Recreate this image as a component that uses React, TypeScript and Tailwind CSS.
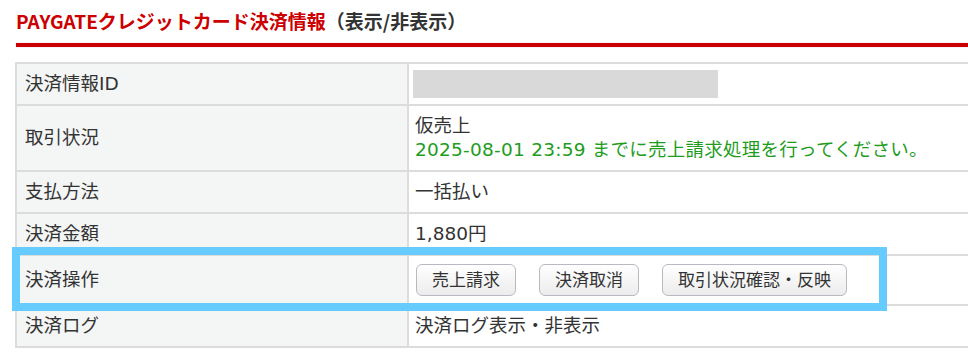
import React from 'react';

const rows = [
  { label: '決済情報ID', kind: 'masked' },
  { label: '取引状況', kind: 'status' },
  { label: '支払方法', kind: 'text', value: '一括払い' },
  { label: '決済金額', kind: 'text', value: '1,880円' },
  { label: '決済操作', kind: 'actions' },
  { label: '決済ログ', kind: 'text', value: '決済ログ表示・非表示' },
];

const actions = ['売上請求', '決済取消', '取引状況確認・反映'];

export default function App() {
  return (
    <div
      className="relative w-[968px] h-[357px] overflow-hidden bg-white text-[#333]"
      style={{ fontFamily: '"DejaVu Sans", "Noto Sans CJK JP", sans-serif' }}
    >
      <div className="pt-[9px] pl-[16px]">
        <h2
          className="text-[19px] leading-[24px] font-bold"
          style={{ fontFamily: '"Noto Sans CJK JP", sans-serif' }}
        >
          <span className="text-[#cc0000]">PAYGATEクレジットカード決済情報</span>
          <span className="text-[#333]">（表示/非表示）</span>
        </h2>
      </div>
      <div className="mt-[10px] ml-[16px] h-[4px] bg-[#c80000] shadow-[0_0_1px_#e88]" />

      <div className="mt-[15px] ml-[15px] w-[970px] border-t-2 border-l-2 border-[#dcdcdc] text-[18.5px] leading-[24px]">
        {rows.map(row => (
          <div key={row.label} className="grid grid-cols-[392px_1fr]">
            <div className="bg-[#f4f5f5] border-r-2 border-b-2 border-[#dcdcdc] px-[8px] py-[8px] flex items-center">
              {row.label}
            </div>
            <div className="border-r-2 border-b-2 border-[#dcdcdc] px-[6px] py-[8px] flex flex-col justify-center">
              {row.kind === 'masked' && (
                <div className="w-[305px] h-[28px] bg-[#d9d9d9] -ml-[2px] my-[-2px]" />
              )}
              {row.kind === 'status' && (
                <>
                  <div>仮売上</div>
                  <div className="text-[#1e9c1e] tracking-[0.25px]">2025-08-01 23:59 までに売上請求処理を行ってください。</div>
                </>
              )}
              {row.kind === 'text' && <div>{row.value}</div>}
              {row.kind === 'actions' && (
                <div className="flex gap-[23px] pl-[1px]">
                  {actions.map(a => (
                    <button
                      key={a}
                      className="h-[32px] px-[15px] text-[17px] leading-[22px] text-[#333] rounded-[6px] border border-[#b9b9c2] bg-gradient-to-b from-white to-[#ececec]"
                    >
                      {a}
                    </button>
                  ))}
                </div>
              )}
            </div>
          </div>
        ))}
      </div>

      <div className="absolute left-[12px] top-[247px] w-[875px] h-[64px] border-[8px] border-[#66ccff]" />
    </div>
  );
}
